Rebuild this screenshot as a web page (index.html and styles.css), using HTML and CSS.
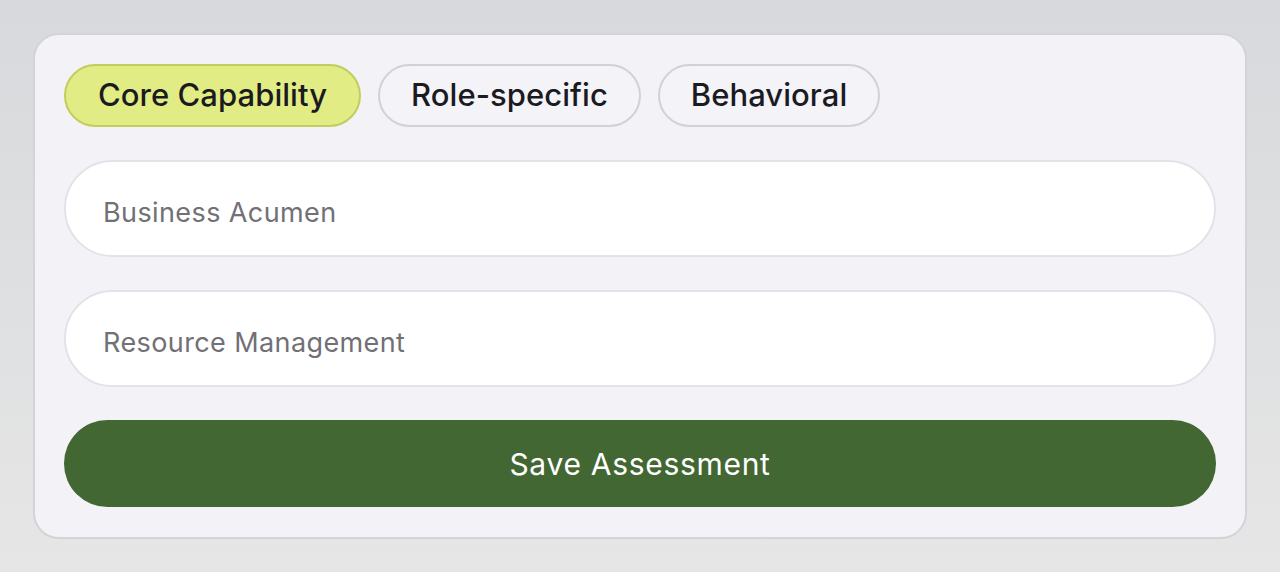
FILE: index.html
```html
<!DOCTYPE html>
<html lang="en">
<head>
<meta charset="utf-8">
<title>Assessment</title>
<link rel="stylesheet" href="styles.css">
</head>
<body>
<div class="card">
  <div class="chips">
    <button class="chip active">Core Capability</button>
    <button class="chip">Role-specific</button>
    <button class="chip">Behavioral</button>
  </div>
  <input class="field" type="text" placeholder="Business Acumen">
  <input class="field" type="text" placeholder="Resource Management">
  <button class="save">Save Assessment</button>
</div>
</body>
</html>
```
FILE: styles.css
```css
* { box-sizing: border-box; }
html, body { margin: 0; height: 100%; }
body {
  background: linear-gradient(180deg, #d7d9dc 0%, #e6e6e6 100%);
  font-family: Inter, "Noto Sans", "Liberation Sans", sans-serif;
  padding: 33px;
}
.card {
  width: 1214px;
  height: 506px;
  background: #f3f2f7;
  border: 2px solid #d3d3d9;
  border-radius: 26px;
  padding: 29px 29px;
  display: flex;
  flex-direction: column;
  gap: 33px;
}
.chips {
  display: flex;
  gap: 17px;
}
.chip {
  height: 63px;
  padding: 0 31px 2px;
  border-radius: 32px;
  border: 2px solid #d2d1d8;
  background: #f4f3f8;
  font-family: inherit;
  font-size: 31px;
  font-weight: 500;
  color: #1b1b1f;
  letter-spacing: 0.05px;
}
.chip.active {
  padding: 0 32px 2px;
  background: #e2ec84;
  border-color: #c2cd5e;
}
.field {
  height: 97px;
  width: 100%;
  border: 2px solid #e3e2e8;
  border-radius: 49px;
  background: #fff;
  padding: 8px 37px 0;
  font-family: inherit;
  font-size: 27px;
  letter-spacing: 0.4px;
  color: #333;
  outline: none;
}
.field::placeholder { color: #717075; }
.save {
  height: 87px;
  width: 100%;
  border: none;
  border-radius: 44px;
  background: #426733;
  color: #fff;
  font-family: inherit;
  font-size: 30px;
  font-weight: 400;
  letter-spacing: 0.7px;
}
```
